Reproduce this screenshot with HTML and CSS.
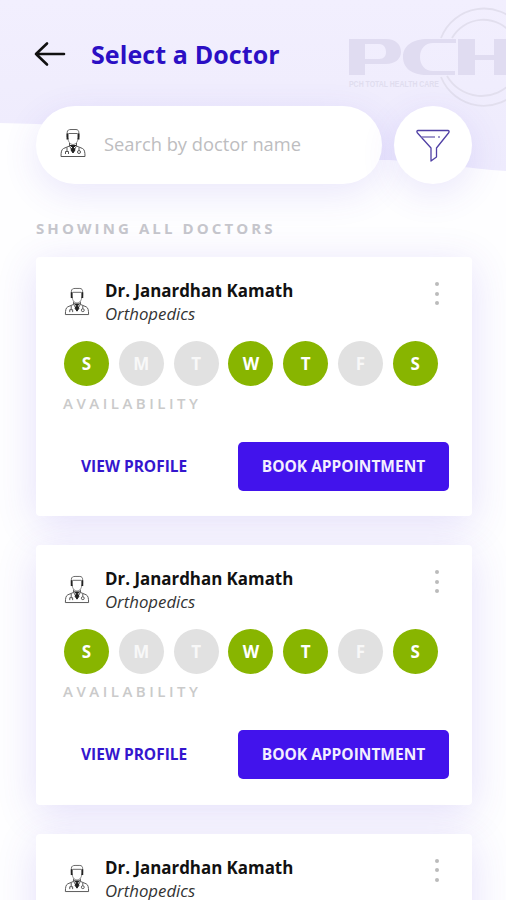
FILE: index.html
```html
<!DOCTYPE html>
<html lang="en">
<head>
<meta charset="utf-8">
<title>Select a Doctor</title>
<link rel="stylesheet" href="styles.css">
</head>
<body>
<svg class="defs" width="0" height="0" aria-hidden="true">
  <symbol id="doctor" viewBox="0 0 26 30">
    <g fill="none" stroke="#555" stroke-width="1" stroke-linejoin="round">
      <path d="M8 10c0 4 2.500 6.500 5 6.500s5-2.500 5-6.500" stroke="#888"/>
      <path d="M7.200 9V4.500C7.200 2 9 1.500 11 1.500h5c2 0 2.800 1.500 2.800 3V9M8.500 5.500h9" stroke="#666"/>
      <path d="M7.500 5.500V11.500M18.500 5.500V11.500" stroke="#222" stroke-width="1.900"/>
      <path d="M9.500 15v3L3.500 20.500C1.500 21.500 1 24 1 28.500h24c0-4.500-.5-7-2.500-8L16.500 18v-3"/>
      <path d="M9.500 18l3.500 6 3.500-6M7 19.500v4M5.500 26v-2.500h3V26M19 19.500v3"/>
      <circle cx="19" cy="24" r="1.500"/>
      <path d="M10 17l3 3 3-3M12 20l-1 2 2 3 2-3-1-2z" fill="#222" stroke="#222"/>
    </g>
  </symbol>
</svg>
<div class="screen">
  <svg class="backdrop" width="506" height="190" viewBox="0 0 506 190" aria-hidden="true">
    <defs><linearGradient id="sky" x1="0" y1="0" x2="0" y2="1"><stop offset="0" stop-color="#f2effe"/><stop offset=".5" stop-color="#f0edfd"/><stop offset="1" stop-color="#eeebfd"/></linearGradient></defs>
    <path fill="url(#sky)" d="M0 0H506V171C470 169 420 160 382 160C260 156 150 128 36 124L0 123Z"/>
    <g fill="none" stroke="#e2dfee" stroke-width="1.800">
      <path d="M441 38A46 46 0 0 1 520 26M441 77A46 46 0 0 0 520 88"/>
      <path d="M452 38A36 36 0 0 1 512 34M447 76A40 40 0 0 0 512 82"/>
    </g>
    <g fill="#e0dcf1">
      <path fill-rule="evenodd" d="M349 39H386C396 39 401 45 401 52S395 64 386 64H365V75H349ZM365 44V59H379C384 59 386 56 386 52S384 44 379 44Z"/>
      <path d="M456 39V43H433C425 43 420 49 420 57S425 71 433 71H455V75H427C412 75 403 68 403 57S412 39 428 39Z"/>
      <path d="M458 39H475V55H494V39H506V75H494V60H475V75H458Z"/>
    </g>
    <text class="logo-caption" x="349" y="87" textLength="90" lengthAdjust="spacingAndGlyphs">PCH TOTAL HEALTH CARE</text>
  </svg>

  <header class="top">
    <svg width="32" height="26" viewBox="0 0 32 26" fill="none" stroke="#111" stroke-width="2.600" stroke-linecap="round" stroke-linejoin="round"><path d="M30 13H2M13 2.500L2 13L13 23.500"/></svg>
    <h1>Select a Doctor</h1>
  </header>

  <div class="search-row">
    <div class="search">
      <svg class="search-doctor" width="26" height="30"><use href="#doctor"/></svg>
      <span>Search by doctor name</span>
    </div>
    <div class="filter">
      <svg width="34" height="34" viewBox="0 0 34 34" fill="none" stroke="#5040a5" stroke-width="1.300" stroke-linejoin="round"><path d="M2 1.500H32Q34 2 32.500 4L20.500 19V28L15 32V19L1.500 4Q0 2 2 1.500Z"/><path d="M5.500 8H19M22 8H24" stroke="#8178bc"/></svg>
    </div>
  </div>

  <h2>SHOWING ALL DOCTORS</h2>

  <main class="cards">
    <article class="card">
      <div class="head">
        <svg class="avatar" width="26" height="29"><use href="#doctor"/></svg>
        <div class="who"><h3>Dr. Janardhan Kamath</h3><p>Orthopedics</p></div>
        <div class="more"><i></i><i></i><i></i></div>
      </div>
      <div class="days"><b class="on">S</b><b>M</b><b>T</b><b class="on">W</b><b class="on">T</b><b>F</b><b class="on">S</b></div>
      <div class="caption">AVAILABILITY</div>
      <div class="actions"><a class="view">VIEW PROFILE</a><a class="book">BOOK APPOINTMENT</a></div>
    </article>
    <article class="card">
      <div class="head">
        <svg class="avatar" width="26" height="29"><use href="#doctor"/></svg>
        <div class="who"><h3>Dr. Janardhan Kamath</h3><p>Orthopedics</p></div>
        <div class="more"><i></i><i></i><i></i></div>
      </div>
      <div class="days"><b class="on">S</b><b>M</b><b>T</b><b class="on">W</b><b class="on">T</b><b>F</b><b class="on">S</b></div>
      <div class="caption">AVAILABILITY</div>
      <div class="actions"><a class="view">VIEW PROFILE</a><a class="book">BOOK APPOINTMENT</a></div>
    </article>
    <article class="card">
      <div class="head">
        <svg class="avatar" width="26" height="29"><use href="#doctor"/></svg>
        <div class="who"><h3>Dr. Janardhan Kamath</h3><p>Orthopedics</p></div>
        <div class="more"><i></i><i></i><i></i></div>
      </div>
    </article>
  </main>
</div>
</body>
</html>
```
FILE: styles.css
```css
* { box-sizing: border-box; }
body { margin: 0; background: #fff; font-family: "Open Sans", "Noto Sans", sans-serif; }
.defs { position: absolute; }
svg { display: block; flex: none; }
h1, h2, h3, p { margin: 0; }
.screen { position: relative; z-index: 0; width: 506px; height: 900px; overflow: hidden; background: #fefeff; }
.backdrop { position: absolute; inset: 0 auto auto 0; z-index: -1; }
.logo-caption { font: 700 9px "Liberation Sans", sans-serif; fill: #e0ddef; }

.top { display: flex; align-items: center; height: 106px; padding: 2px 0 0 34px; gap: 25px; }
.top h1 { font-size: 25px; line-height: 34px; font-weight: 700; color: #2b0fc4; letter-spacing: .1px; }

.search-row { display: flex; gap: 12px; padding-left: 36px; height: 78px; }
.search, .filter { background: #fff; box-shadow: 0 10px 36px rgba(91, 62, 225, .12); }
.search { width: 346px; border-radius: 39px; display: flex; align-items: center; padding-left: 24px; gap: 18px; color: #bdbdc0; font-size: 18.300px; }
.search span { margin-top: -3px; }
.search-doctor { margin-top: -4px; }
.filter { width: 78px; border-radius: 50%; display: grid; place-items: center; }
.filter svg { margin-top: 2px; }

h2 { margin: 32px 0 0 36px; height: 41px; line-height: 24px; font-size: 15px; font-weight: 700; letter-spacing: 3.100px; color: #c6c6cc; }

.cards { display: flex; flex-direction: column; gap: 29px; padding-left: 36px; }
.card { width: 436px; height: 259.300px; flex: none; background: #fff; border-radius: 4px; padding: 22px 23px 0 27px; box-shadow: 0 8px 40px rgba(91, 62, 225, .16); }
.head { display: flex; height: 62px; }
.avatar { margin: 8px 15px 0 1px; }
.who h3 { font-size: 16.900px; line-height: 24px; font-weight: 700; color: #111; }
.who p { font-size: 16.800px; line-height: 21px; font-style: italic; color: #333; }
.more { display: flex; flex-direction: column; gap: 5.500px; margin: 3px 10px 0 auto; }
.more i { width: 4px; height: 4px; border-radius: 50%; background: #bbb; }
.days { display: flex; gap: 9.800px; padding-left: 1px; }
.days b { display: grid; place-items: center; width: 45px; height: 45px; border-radius: 50%; background: #e1e1e1; color: #f8f8f8; font-size: 17px; line-height: 24px; font-weight: 700; }
.days .on { background: #88b500; color: #fff; }
.caption { margin-top: 6px; line-height: 22px; font-size: 15px; letter-spacing: 3.500px; font-weight: 600; color: #cacaca; }
.actions { display: flex; justify-content: space-between; align-items: center; margin-top: 28px; height: 49px; font-size: 15.500px; font-weight: 700; }
.view { padding-left: 18px; margin-top: -1px; color: #3416ce; }
.book { width: 211px; height: 49px; padding-bottom: 1px; display: grid; place-items: center; border-radius: 5px; background: #4213ec; color: #f3efff; }
```
